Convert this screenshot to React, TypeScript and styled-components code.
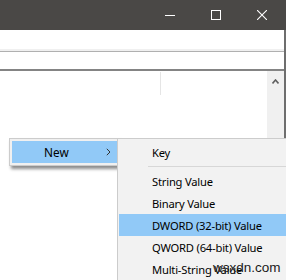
import styled, { createGlobalStyle } from 'styled-components';

const GlobalStyle = createGlobalStyle`
  html, body {
    margin: 0;
    padding: 0;
    background: #ffffff;
    overflow: hidden;
  }
`;

const subItems = [
  'String Value',
  'Binary Value',
  'DWORD (32-bit) Value',
  'QWORD (64-bit) Value',
  'Multi-String Value',
];

const App = () => {
  return (
    <Window>
      <GlobalStyle />
      <TitleBar>
        <CaptionButton>
          <svg width="10" height="10" viewBox="0 0 10 10">
            <line x1="0" y1="5.5" x2="10" y2="5.5" stroke="#ffffff" strokeWidth="1" />
          </svg>
        </CaptionButton>
        <CaptionButton>
          <svg width="10" height="10" viewBox="0 0 10 10">
            <rect x="0.5" y="0.5" width="9" height="9" fill="none" stroke="#ffffff" strokeWidth="1" />
          </svg>
        </CaptionButton>
        <CaptionButton>
          <svg width="10" height="10" viewBox="0 0 10 10">
            <path d="M0 0 L10 10 M10 0 L0 10" stroke="#ffffff" strokeWidth="1.1" />
          </svg>
        </CaptionButton>
      </TitleBar>
      <Body>
        <MenuBar />
        <AddressBar />
        <Pane>
          <List>
            <Header>
              <HeaderCell />
            </Header>
          </List>
          <Scrollbar>
            <ArrowButton>
              <svg width="7" height="5" viewBox="0 0 7 5">
                <path d="M0.5 4.5 L3.5 1 L6.5 4.5" fill="none" stroke="#606060" strokeWidth="1.6" />
              </svg>
            </ArrowButton>
          </Scrollbar>
        </Pane>
      </Body>

      <NewMenu>
        <MenuItem $active>
          New
          <Chevron>
            <svg width="5" height="8" viewBox="0 0 5 8">
              <path d="M0.8 0.8 L4 4 L0.8 7.2" fill="none" stroke="#333333" strokeWidth="1" />
            </svg>
          </Chevron>
        </MenuItem>
      </NewMenu>

      <SubMenu>
        <SubItem>Key</SubItem>
        <Separator />
        {subItems.map((label) => (
          <SubItem key={label} $active={label.startsWith('DWORD')}>
            {label}
            {label === 'Multi-String Value' && <Watermark>wsxdn.com</Watermark>}
          </SubItem>
        ))}
      </SubMenu>
    </Window>
  );
};

export default App;

const Window = styled.div`
  position: relative;
  width: 286px;
  height: 280px;
  display: flex;
  flex-direction: column;
  background: #ffffff;
  overflow: hidden;
  font-family: 'Noto Sans', 'Open Sans', sans-serif;
`;

const TitleBar = styled.div`
  height: 30px;
  flex-shrink: 0;
  display: flex;
  justify-content: flex-end;
  padding-right: 1px;
  background: #4a4846;
`;

const CaptionButton = styled.div`
  width: 46px;
  display: flex;
  align-items: center;
  justify-content: center;
`;

const Body = styled.div`
  flex: 1;
  display: flex;
  flex-direction: column;
  border-right: 2px solid #6e6e6e;
`;

const MenuBar = styled.div`
  height: 19px;
  border-bottom: 2px solid #f0f0f0;
`;

const AddressBar = styled.div`
  height: 17px;
  border-top: 1px solid #b0b0b0;
  border-bottom: 2px solid #848484;
`;

const Pane = styled.div`
  flex: 1;
  display: flex;
`;

const List = styled.div`
  flex: 1;
`;

const Header = styled.div`
  height: 25px;
  display: flex;
  align-items: flex-start;
`;

const HeaderCell = styled.div`
  width: 160px;
  height: 23px;
  margin-top: 1px;
  border-right: 1px solid #e5e5e5;
`;

const Scrollbar = styled.div`
  width: 17px;
  background: #f0f0f0;
`;

const ArrowButton = styled.div`
  height: 20px;
  display: flex;
  align-items: center;
  justify-content: center;
`;

const NewMenu = styled.div`
  position: absolute;
  left: 9px;
  top: 138px;
  width: 106px;
  padding: 2px;
  border: 1px solid #cccccc;
  background: #f0f0f0;
  box-shadow: 2px 3px 3px rgba(0, 0, 0, 0.45);
`;

const MenuItem = styled.div<{ $active?: boolean }>`
  height: 22px;
  display: flex;
  align-items: center;
  padding-left: 32px;
  font-size: 11.8px;
  color: #000000;
  background: ${({ $active }) => ($active ? '#91c9f7' : 'transparent')};
`;

const Chevron = styled.span`
  margin-left: auto;
  margin-right: 7px;
  display: flex;
`;

const SubMenu = styled.div`
  position: absolute;
  left: 117px;
  top: 138px;
  right: -10px;
  bottom: -10px;
  padding: 2px 0 0 1px;
  border: 1px solid #cccccc;
  background: #f2f2f2;
`;

const SubItem = styled.div<{ $active?: boolean }>`
  position: relative;
  height: 22px;
  display: flex;
  align-items: center;
  padding-left: 33px;
  font-size: 11.2px;
  letter-spacing: -0.2px;
  color: #000000;
  white-space: nowrap;
  background: ${({ $active }) => ($active ? '#91c9f7' : 'transparent')};
`;

const Separator = styled.div`
  height: 1px;
  margin: 3px 0 3px 29px;
  background: #d7d7d7;
`;

const Watermark = styled.span`
  position: absolute;
  left: 94px;
  top: 2px;
  font-family: 'Liberation Sans', Arial, sans-serif;
  font-size: 13.5px;
  letter-spacing: 0;
  color: #1a1a1a;
`;
